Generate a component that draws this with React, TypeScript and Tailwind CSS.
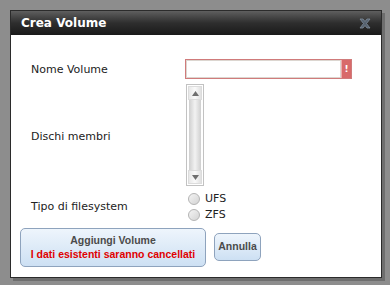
import React from "react";

function CloseIcon() {
  return (
    <svg width="12" height="11" viewBox="0 0 12 11">
      <path d="M1 1 L4 1 L6 3.5 L8 1 L11 1 L7.5 5.5 L11 10 L8 10 L6 7.5 L4 10 L1 10 L4.5 5.5 Z" fill="#56626f" stroke="#7f8d9c" strokeWidth="0.8" />
    </svg>
  );
}

function Radio({ label }: { label: string }) {
  return (
    <div className="flex items-center h-[16px]">
      <div className="w-[12px] h-[12px] rounded-full border border-[#b4b4b4] bg-gradient-to-br from-[#f4f4f4] to-[#d4d4d4] ml-[3px]" />
      <span className="ml-[5px] text-[11px] text-[#222]">{label}</span>
    </div>
  );
}

const btnFont = { fontFamily: '"Liberation Sans", Arial, sans-serif' };

export default function App() {
  return (
    <div
      className="w-[390px] h-[285px] bg-[#8d8d8d] pt-[10px] pl-[10px]"
      style={{ fontFamily: '"DejaVu Sans", Verdana, sans-serif' }}
    >
      <div className="w-[372px] h-[268px] border border-[#2b2b2b] bg-white shadow-[3px_3px_0_#6e6e6e] flex flex-col">
        <div className="h-[24px] bg-gradient-to-b from-[#5f5f5f] via-[#2e2e2e] to-[#1a1a1a] flex items-center justify-between pl-[10px] pr-[10px]">
          <span className="text-white font-bold text-[12px] leading-none">Crea Volume</span>
          <CloseIcon />
        </div>
        <div className="flex flex-col pl-[20px] text-[11px] text-[#222]">
          <div className="mt-[24px] flex items-center h-[20px]">
            <div className="w-[154px] pt-[2px]">Nome Volume</div>
            <div className="w-[167px] h-[20px] border border-[#d07b7b] flex">
              <div className="flex-1 border border-[#dcd6d0] bg-white" />
              <div className="w-[10px] bg-[#d86a6a] flex items-center justify-center border-l border-[#eaa]">
                <span className="text-white text-[9px] font-bold leading-none">!</span>
              </div>
            </div>
          </div>
          <div className="mt-[5px] flex items-center h-[102px]">
            <div className="w-[155px] pt-[4px]">Dischi membri</div>
            <div className="w-[18px] h-[102px] border border-[#c2c2c2] flex flex-col p-[1px] bg-white">
              <div className="h-[14px] flex items-center justify-center bg-gradient-to-r from-[#e8e8e8] via-[#fafafa] to-[#e0e0e0] border border-[#dcdcdc]">
                <svg width="7" height="5" viewBox="0 0 7 5"><path d="M3.5 0 L7 5 L0 5 Z" fill="#6f6f6f" /></svg>
              </div>
              <div className="flex-1 bg-gradient-to-r from-[#cfcfcf] via-[#f2f2f2] to-[#cfcfcf] mx-[1px]" />
              <div className="h-[14px] flex items-center justify-center bg-gradient-to-r from-[#e8e8e8] via-[#fafafa] to-[#e0e0e0] border border-[#dcdcdc]">
                <svg width="7" height="5" viewBox="0 0 7 5"><path d="M0 0 L7 0 L3.5 5 Z" fill="#6f6f6f" /></svg>
              </div>
            </div>
          </div>
          <div className="mt-[4px] flex items-center h-[34px]">
            <div className="w-[154px] pt-[1px]">Tipo di filesystem</div>
            <div className="flex flex-col">
              <Radio label="UFS" />
              <Radio label="ZFS" />
            </div>
          </div>
          <div className="mt-[3px] -ml-[11px] flex items-center h-[40px]">
            <button className="w-[186px] h-[39px] rounded-[5px] border border-[#8ea3bd] bg-gradient-to-b from-[#eef5fc] to-[#cde0f3] flex flex-col items-center justify-center text-[10.5px] font-bold leading-[14px] whitespace-nowrap" style={btnFont}>
              <span className="text-[#4b4b4b]">Aggiungi Volume</span>
              <span className="text-[#e00000]">I dati esistenti saranno cancellati</span>
            </button>
            <button className="ml-[8px] w-[47px] h-[28px] rounded-[5px] border border-[#8ea3bd] bg-gradient-to-b from-[#eef5fc] to-[#cde0f3] flex items-center justify-center text-[10.5px] font-bold text-[#4b4b4b]" style={btnFont}>
              Annulla
            </button>
          </div>
        </div>
      </div>
    </div>
  );
}
